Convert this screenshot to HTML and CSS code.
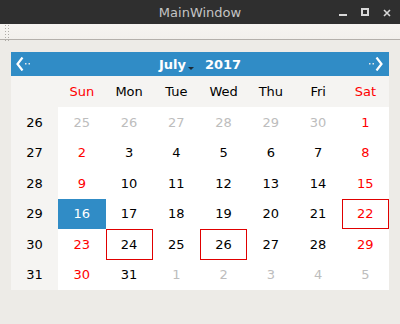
FILE: index.html
```html
<!DOCTYPE html>
<html>
<head>
    <link rel="stylesheet" href="styles.css">
</head>
<body>
    <div class="titlebar">
        <span class="title">MainWindow</span>
        <div class="win-buttons">
            <span class="btn-min"></span>
            <span class="btn-max"></span>
            <svg class="btn-close" width="8" height="8" viewBox="0 0 8 8">
                <path d="M1 1 L7 7 M7 1 L1 7" stroke="#d8d8d8" stroke-width="1.6"/>
            </svg>
        </div>
    </div>
    <div class="toolbar">
        <!-- dotted grip of the tool bar -->
        <svg class="handle" width="4" height="16" viewBox="0 0 4 16">
            <defs>
                <pattern id="grip" width="3" height="3" patternUnits="userSpaceOnUse">
                    <rect x="0" y="0" width="1" height="1" fill="#aeaba6"/>
                </pattern>
            </defs>
            <rect x="0" y="0" width="4" height="16" fill="url(#grip)"/>
        </svg>
    </div>

    <div class="main">
        <div class="calendar">
            <div class="cal-head">
                <svg class="nav" width="16" height="14" viewBox="0 0 16 14">
                    <path d="M6.5 0.5 L1.5 7 L6.5 13.5" fill="none" stroke="#fff" stroke-width="2.2"/>
                    <rect x="9" y="6" width="1.5" height="1.5" fill="#e8e8e8"/>
                    <rect x="12.5" y="6" width="1.5" height="1.5" fill="#e8e8e8"/>
                </svg>
                <div class="month-year">
                    <span class="month">July</span><span class="drop"></span>
                    <span class="year">2017</span>
                </div>
                <svg class="nav" width="16" height="14" viewBox="0 0 16 14">
                    <rect x="1" y="6" width="1.5" height="1.5" fill="#e8e8e8"/>
                    <rect x="4.5" y="6" width="1.5" height="1.5" fill="#e8e8e8"/>
                    <path d="M8.5 0.5 L13.5 7 L8.5 13.5" fill="none" stroke="#fff" stroke-width="2.2"/>
                </svg>
            </div>
            <div class="cal-grid">
                <div class="hd"></div>
                <div class="hd red">Sun</div>
                <div class="hd">Mon</div>
                <div class="hd">Tue</div>
                <div class="hd">Wed</div>
                <div class="hd">Thu</div>
                <div class="hd">Fri</div>
                <div class="hd red">Sat</div>

                <div class="wk">26</div>
                <div class="day other">25</div>
                <div class="day other">26</div>
                <div class="day other">27</div>
                <div class="day other">28</div>
                <div class="day other">29</div>
                <div class="day other">30</div>
                <div class="day red">1</div>

                <div class="wk">27</div>
                <div class="day red">2</div>
                <div class="day">3</div>
                <div class="day">4</div>
                <div class="day">5</div>
                <div class="day">6</div>
                <div class="day">7</div>
                <div class="day red">8</div>

                <div class="wk">28</div>
                <div class="day red">9</div>
                <div class="day">10</div>
                <div class="day">11</div>
                <div class="day">12</div>
                <div class="day">13</div>
                <div class="day">14</div>
                <div class="day red">15</div>

                <div class="wk">29</div>
                <div class="day selected">16</div>
                <div class="day">17</div>
                <div class="day">18</div>
                <div class="day">19</div>
                <div class="day">20</div>
                <div class="day">21</div>
                <div class="day red marked">22</div>

                <div class="wk">30</div>
                <div class="day red">23</div>
                <div class="day marked">24</div>
                <div class="day">25</div>
                <div class="day marked">26</div>
                <div class="day">27</div>
                <div class="day">28</div>
                <div class="day red">29</div>

                <div class="wk">31</div>
                <div class="day red">30</div>
                <div class="day">31</div>
                <div class="day other">1</div>
                <div class="day other">2</div>
                <div class="day other">3</div>
                <div class="day other">4</div>
                <div class="day other">5</div>
            </div>
        </div>
    </div>
</body>
</html>
```

FILE: styles.css
```css
body {
    margin: 0;
    width: 400px;
    height: 324px;
    overflow: hidden;
    background-color: #edebe7;
    font-family: "DejaVu Sans", sans-serif;
    font-size: 13px;
}

.titlebar {
    height: 24px;
    background-color: #2f2f2f;
    position: relative;
    display: flex;
    align-items: center;
    justify-content: center;
}

.title {
    color: #c4c4c4;
    font-size: 13px;
}

.win-buttons {
    position: absolute;
    right: 9px;
    top: 8px;
    display: flex;
    align-items: flex-end;
    gap: 14px;
}

.btn-min {
    width: 8px;
    height: 2px;
    margin-bottom: 1px;
    background-color: #d8d8d8;
}

.btn-max {
    width: 4px;
    height: 4px;
    border: 2px solid #d8d8d8;
    margin-bottom: 1px;
}

.toolbar {
    height: 15px;
    background: linear-gradient(#f6f4f1, #f2f0ec);
    border-bottom: 1px solid #b4b0ab;
    position: relative;
}

.handle {
    position: absolute;
    left: 5px;
    top: 1px;
}

.main {
    padding: 12px 11px;
}

.calendar {
    width: 378px;
}

.cal-head {
    height: 24px;
    background-color: #308cc6;
    display: flex;
    align-items: center;
    justify-content: space-between;
    padding: 0 5px;
}

.month-year {
    color: #ffffff;
    font-weight: bold;
    display: flex;
    align-items: center;
}

.drop {
    width: 0;
    height: 0;
    border-left: 3px solid transparent;
    border-right: 3px solid transparent;
    border-top: 3px solid #1c2a36;
    margin: 9px 0 0 2px;
}

.year {
    margin-left: 11px;
}

.cal-grid {
    display: grid;
    grid-template-columns: repeat(8, 1fr);
    grid-template-rows: 31px repeat(6, 1fr);
    height: 214px;
    background-color: #ffffff;
}

.cal-grid > div {
    display: flex;
    align-items: center;
    justify-content: center;
    color: #000000;
}

.hd, .wk {
    background-color: #f5f4f2;
}

.cal-grid > .red {
    color: #ff0000;
}

.cal-grid > .other {
    color: #bdbdbd;
}

.cal-grid > .selected {
    background-color: #308cc6;
    color: #ffffff;
}

.marked {
    box-shadow: inset 0 0 0 1px #e00000;
}
```
